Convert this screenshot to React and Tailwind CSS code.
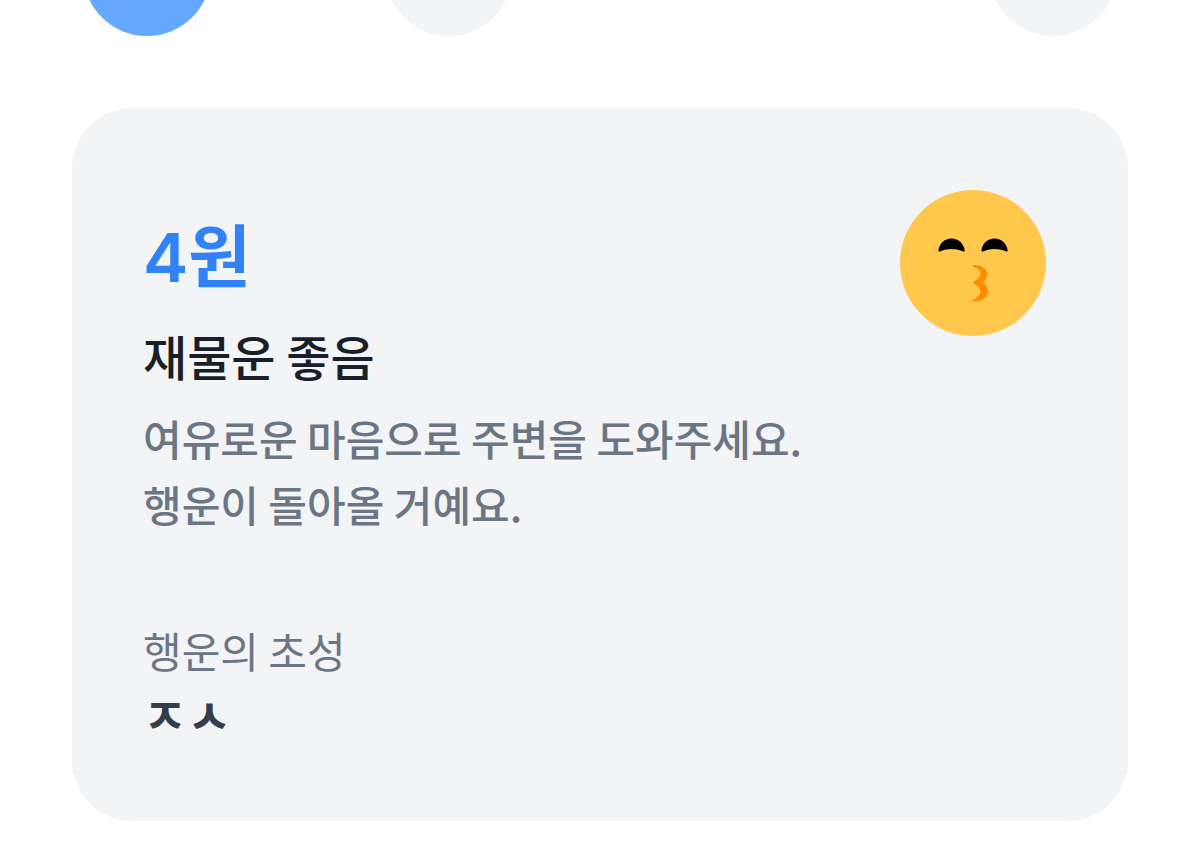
const categories = [
  { label: "재물운", className: "bg-[#64a8ff]" },
  { label: "애정운", className: "bg-[#f2f4f6]" },
  { label: "건강운", className: "invisible" },
  { label: "학업운", className: "bg-[#f2f4f6]" },
];

const CategoryTabs = () => {
  return (
    <nav className="flex h-9 items-end justify-between overflow-hidden px-[83px]">
      {categories.map((category) => (
        <button
          key={category.label}
          type="button"
          aria-label={category.label}
          className={`size-32 shrink-0 rounded-full ${category.className}`}
        />
      ))}
    </nav>
  );
};

const KissingFace = () => {
  return (
    <svg viewBox="0 0 146 146" className="size-[146px] shrink-0" aria-hidden="true">
      <circle cx="73" cy="73" r="73" fill="#ffc84d" />
      <path d="M38.5 60.5 C39 54 44.5 48.5 51.5 48.5 C58.5 48.5 64 54 64.7 60.5 C64.8 61.7 63.6 61.8 62.7 61.2 C55.5 58.3 47.5 58.3 40.5 61.2 C39.5 61.8 38.4 61.7 38.5 60.5Z" fill="#000" />
      <path d="M81.5 60.5 C82 54 87.5 48.5 94.5 48.5 C101.5 48.5 107 54 107.7 60.5 C107.8 61.7 106.6 61.8 105.7 61.2 C98.5 58.3 90.5 58.3 83.5 61.2 C82.5 61.8 81.4 61.7 81.5 60.5Z" fill="#000" />
      <path d="M73.5 75 C80 74.4 87.3 78.7 87.3 84.2 C87.3 87.7 85 90.4 81.8 92.6 C85.4 94.2 88 97.4 88 101.2 C88 107.7 81 111.8 73.5 111.5 C71.7 111.3 71.8 110.3 73.2 109.7 C77.5 107.9 80.3 104.6 80.3 100.9 C80.3 97.6 77 95 73.7 93.4 C72.8 93 72.8 92.2 73.7 91.7 C77.5 89.6 80.5 87.2 80.5 83.8 C80.5 80.4 77.6 77.9 73.6 76.9 C72.4 76.5 72.4 75.2 73.5 75Z" fill="#ff8c00" />
    </svg>
  );
};

const FortuneCard = () => {
  return (
    <section className="mx-[72px] mt-[72px] rounded-[60px] bg-[#f2f4f6]">
      <div className="flex items-start justify-between border-b border-[#eef0f2] pt-[82px] pr-[82px] pb-[29px] pl-[71px]">
        <div className="pt-[23px]">
          <p className="font-[Inter,'Noto_Sans_CJK_KR',sans-serif] text-[68px] leading-[88px] font-semibold text-[#3182f6]">
            4원
          </p>
          <h2 className="mt-[18px] text-5xl leading-[72px] font-medium text-[#191f28]">재물운 좋음</h2>
          <p className="mt-3.5 text-[42px] leading-[66px] font-medium text-[#6b7684]">
            여유로운 마음으로 주변을 도와주세요.
            <br />
            행운이 돌아올 거예요.
          </p>
          <dl className="mt-20">
            <dt className="text-[42px] leading-[66px] text-[#6b7684]">행운의 초성</dt>
            <dd className="text-5xl leading-[60px] font-bold text-[#333d4b]">ㅈㅅ</dd>
          </dl>
        </div>
        <KissingFace />
      </div>
      <div className="h-12" />
    </section>
  );
};

const App = () => {
  return (
    <main className="bg-white font-['Noto_Sans_CJK_KR',sans-serif]">
      <CategoryTabs />
      <FortuneCard />
    </main>
  );
};

export default App;
